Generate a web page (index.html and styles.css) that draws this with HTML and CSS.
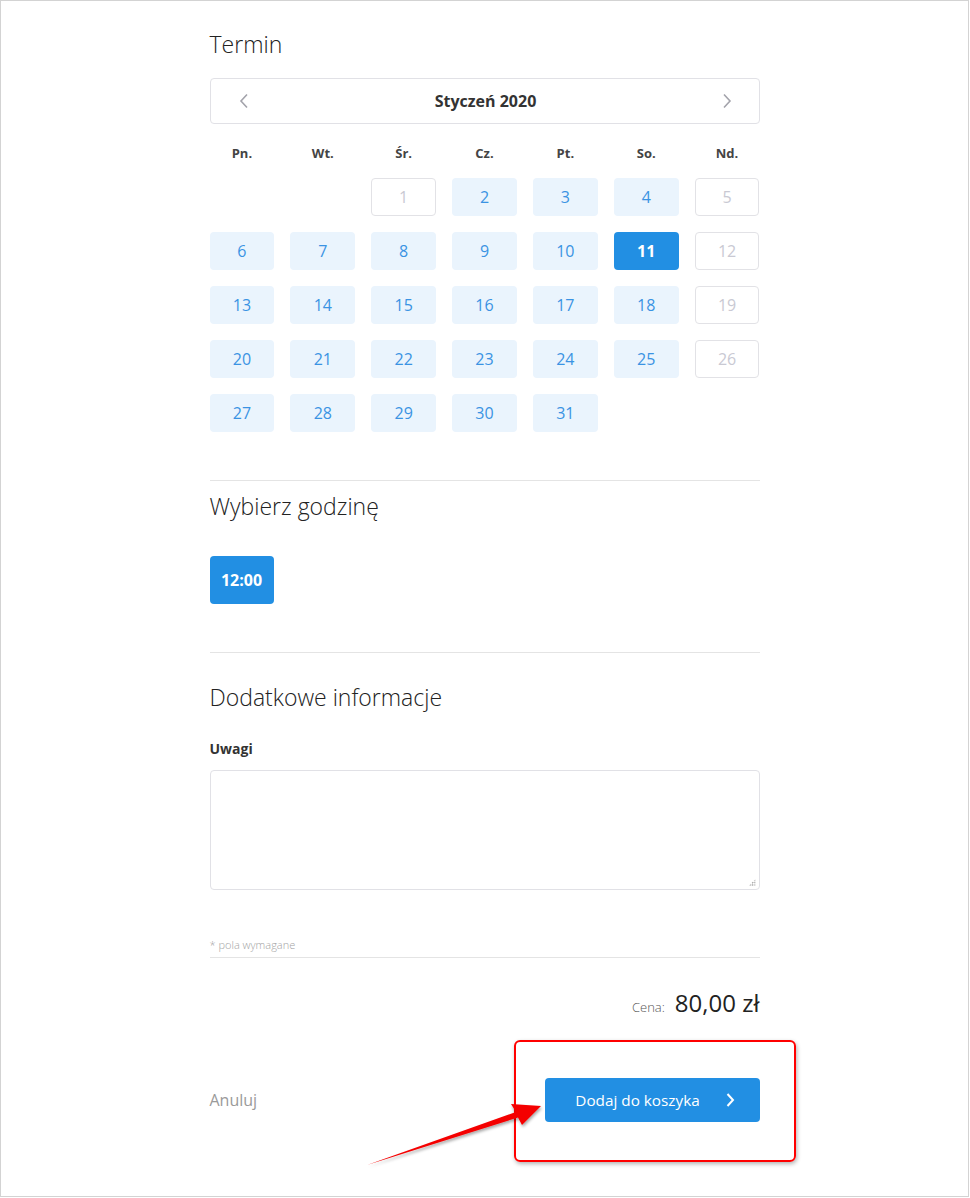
FILE: index.html
```html
<!DOCTYPE html>
<html lang="pl">
<head>
<meta charset="utf-8">
<title>Termin</title>
<link rel="stylesheet" href="styles.css">
</head>
<body>
<div class="frame">
  <main class="content">
    <h2 class="section-title title-first">Termin</h2>
    <div class="cal-head">
      <button class="nav" aria-label="Poprzedni"><svg width="10" height="16" viewBox="0 0 10 16"><path d="M8 1.5 L2 8 L8 14.5" fill="none" stroke="#a3a3ab" stroke-width="1.6"/></svg></button>
      <span class="month">Styczeń 2020</span>
      <button class="nav" aria-label="Następny"><svg width="10" height="16" viewBox="0 0 10 16"><path d="M2 1.5 L8 8 L2 14.5" fill="none" stroke="#a3a3ab" stroke-width="1.6"/></svg></button>
    </div>
    <div class="weekdays">
      <span>Pn.</span><span>Wt.</span><span>Śr.</span><span>Cz.</span><span>Pt.</span><span>So.</span><span>Nd.</span>
    </div>
    <div class="days">
      <span class="empty"></span><span class="empty"></span>
      <span class="day off">1</span><span class="day">2</span><span class="day">3</span><span class="day">4</span><span class="day off">5</span>
      <span class="day">6</span><span class="day">7</span><span class="day">8</span><span class="day">9</span><span class="day">10</span><span class="day sel">11</span><span class="day off">12</span>
      <span class="day">13</span><span class="day">14</span><span class="day">15</span><span class="day">16</span><span class="day">17</span><span class="day">18</span><span class="day off">19</span>
      <span class="day">20</span><span class="day">21</span><span class="day">22</span><span class="day">23</span><span class="day">24</span><span class="day">25</span><span class="day off">26</span>
      <span class="day">27</span><span class="day">28</span><span class="day">29</span><span class="day">30</span><span class="day">31</span>
    </div>

    <hr class="divider div-1">
    <h2 class="section-title title-hour">Wybierz godzinę</h2>
    <div class="hours"><button class="hour">12:00</button></div>

    <hr class="divider div-2">
    <h2 class="section-title title-info">Dodatkowe informacje</h2>
    <label class="label" for="uwagi">Uwagi</label>
    <div class="notes-wrap">
      <textarea id="uwagi" class="notes"></textarea>
      <span class="grip"></span>
    </div>

    <div class="required">* pola wymagane</div>

    <div class="price"><span class="price-label">Cena:</span><span class="price-value">80,00 zł</span></div>

    <div class="actions">
      <a class="cancel">Anuluj</a>
      <button class="add">Dodaj do koszyka <svg width="10" height="16" viewBox="0 0 10 16"><path d="M2.5 2 L8 8 L2.5 14" fill="none" stroke="#fff" stroke-width="2"/></svg></button>
    </div>
  </main>

  <div class="annot-box"></div>
  <svg class="annot-arrow" width="970" height="1198" viewBox="0 0 970 1198">
    <defs>
      <filter id="sh" x="-10%" y="-30%" width="130%" height="180%">
        <feDropShadow dx="1" dy="2" stdDeviation="1.6" flood-color="#000" flood-opacity="0.35"/>
      </filter>
    </defs>
    <polygon points="366,1164 515,1111 510,1103 540,1105 521,1124 517,1116.5" fill="#f40000" filter="url(#sh)"/>
  </svg>
</div>
</body>
</html>
```

FILE: styles.css
```css
* { box-sizing: border-box; }
html, body { margin: 0; padding: 0; background: #fff; }
body { font-family: "Open Sans", "Noto Sans", sans-serif; color: #333; }

.frame {
  position: relative;
  width: 969px;
  height: 1197px;
  border: 1px solid #d3d3d3;
  background: #fff;
  overflow: hidden;
}

.content {
  width: 550px;
  margin: 0 auto;
  padding-top: 28px;
  display: flex;
  flex-direction: column;
}

.section-title {
  margin: 0;
  font-size: 23px;
  line-height: 30px;
  font-weight: 300;
  color: #222;
}

.cal-head {
  margin-top: 19px;
  height: 46px;
  border: 1px solid #e1e1e6;
  border-radius: 4px;
  display: flex;
  align-items: center;
  justify-content: space-between;
  padding: 0 24px 0 26px;
}
.nav { background: none; border: 0; padding: 0; width: 14px; height: 18px; display: flex; align-items: center; justify-content: center; }
.month { font-weight: 700; font-size: 16px; color: #333; }

.weekdays {
  margin-top: 19px;
  display: grid;
  grid-template-columns: repeat(7, 1fr);
  column-gap: 16px;
  font-size: 13px;
  font-weight: 700;
  line-height: 20px;
  color: #444;
  text-align: center;
}

.days {
  margin-top: 15px;
  display: grid;
  grid-template-columns: repeat(7, 1fr);
  gap: 16px;
}
.day {
  height: 38px;
  border-radius: 4px;
  background: #eaf4fd;
  color: #3a93e3;
  font-size: 16px;
  display: flex;
  align-items: center;
  justify-content: center;
}
.day.off { background: #fff; border: 1px solid #e2e2e6; color: #c9c9d3; }
.day.sel { background: #228fe3; color: #fff; font-weight: 700; }

.divider { border: 0; border-top: 1px solid #e4e4e4; margin: 0; width: 100%; }
.div-1 { margin-top: 48px; }
.title-hour { margin-top: 10px; }
.hours { margin-top: 35px; display: flex; }
.hour {
  width: 64px; height: 48px;
  background: #228fe3; color: #fff; border: 0; border-radius: 4px;
  font-family: inherit; font-size: 16px; font-weight: 700;
}
.div-2 { margin-top: 48px; }
.title-info { margin-top: 29px; }

.label { margin-top: 27px; font-size: 14px; font-weight: 700; color: #333; line-height: 20px; }
.notes-wrap { position: relative; margin-top: 11px; height: 120px; }
.notes {
  display: block;
  height: 120px;
  width: 100%;
  border: 1px solid #e1e1e6;
  border-radius: 4px;
  resize: none;
  font-family: inherit;
}
.grip {
  position: absolute;
  right: 4px; bottom: 4px;
  width: 7px; height: 7px;
  background-image: radial-gradient(circle, #9a9a9a 0.7px, transparent 0.9px);
  background-size: 2.4px 2.4px;
  clip-path: polygon(100% 0, 100% 100%, 0 100%);
}

.required {
  margin-top: 47px;
  font-size: 11px;
  color: #a3a3a3;
  font-weight: 300;
  line-height: 16px;
  padding-bottom: 4px;
  border-bottom: 1px solid #e4e4e4;
}

.price {
  margin-top: 28px;
  display: flex;
  justify-content: flex-end;
  align-items: baseline;
  gap: 10px;
}
.price-label { font-size: 13px; color: #555; font-weight: 300; }
.price-value { font-size: 24px; color: #222; }

.actions {
  margin-top: 59px;
  display: flex;
  justify-content: space-between;
  align-items: center;
}
.cancel { font-size: 16px; color: #9a9a9a; cursor: pointer; }
.add {
  width: 215px; height: 44px;
  background: #228fe3; color: #fff;
  border: 0; border-radius: 4px;
  font-family: inherit; font-size: 15.3px;
  display: flex; align-items: center; justify-content: center;
  gap: 25px;
  padding-left: 12px;
}

.annot-box {
  position: absolute;
  left: 513px; top: 1039px;
  width: 282px; height: 122px;
  border: 2px solid #f00;
  border-radius: 6px;
  box-shadow: 1px 2px 4px rgba(0,0,0,0.3);
}
.annot-arrow { position: absolute; left: 0; top: 0; pointer-events: none; }
```
